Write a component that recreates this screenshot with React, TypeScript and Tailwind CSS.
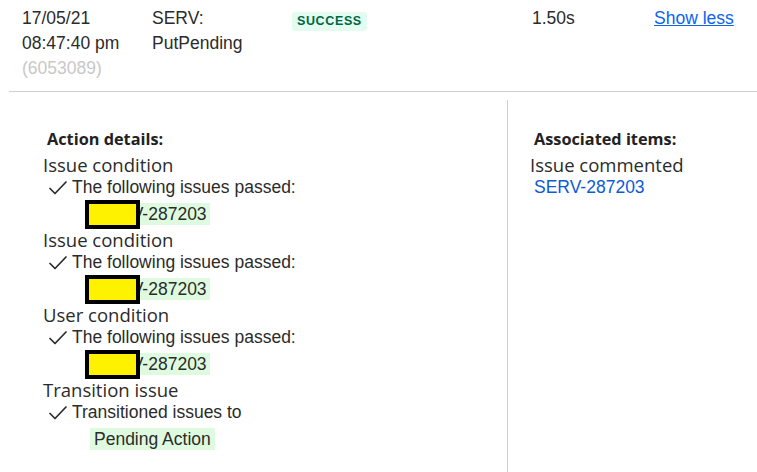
import React from "react";

const arial = { fontFamily: '"Liberation Sans", Arial, sans-serif' };
const segoe = { fontFamily: '"Open Sans", "Noto Sans", sans-serif' };

function Redacted({ id }: { id: string }) {
  return (
    <div className="h-[29px] flex items-center pl-[42px]">
      <span className="relative inline-block bg-[#dffbdf] leading-[22px] h-[22px] pl-[11px] pr-[3px] text-[17.5px] text-[#2b2b2b]" style={arial}>
        {id}
        <span className="absolute left-0 top-[-3px] w-[55px] h-[29px] border-[4px] border-black bg-[#fff200]" />
      </span>
    </div>
  );
}

function Check({ text }: { text: string }) {
  return (
    <div className="h-[23px] leading-[23px] flex items-center pl-[6px] text-[17.5px] text-[#2b2b2b]" style={arial}>
      <span className="w-[23px] flex items-center">
        <svg width="18" height="14" viewBox="0 0 18 14" fill="none">
          <path d="M1 7.5 L6 12.5 L17 1" stroke="#2b2b2b" strokeWidth="1.7" strokeLinecap="round" strokeLinejoin="round" />
        </svg>
      </span>
      <span>{text}</span>
    </div>
  );
}

function Heading({ text }: { text: string }) {
  return (
    <div className="h-[23px] leading-[23px] text-[18.5px] text-[#2b2b2b]" style={segoe}>
      {text}
    </div>
  );
}

export default function App() {
  return (
    <div className="w-[757px] h-[472px] bg-white overflow-hidden text-[#2b2b2b]" style={arial}>
      <div className="flex pl-[22px] pt-[6px] h-[91px] text-[17.5px] leading-[25px]">
        <div className="w-[130px]">
          <div>17/05/21</div>
          <div>08:47:40 pm</div>
          <div className="text-[#c8c8c8]">(6053089)</div>
        </div>
        <div className="w-[140px]">
          <div>SERV:</div>
          <div>PutPending</div>
        </div>
        <div className="w-[240px] pt-[1px]">
          <span className="inline-block bg-[#e3fcef] text-[#006644] font-bold text-[12.5px] leading-[19px] h-[19px] px-[5px] rounded-[3px] tracking-[0.05em]">SUCCESS</span>
        </div>
        <div className="w-[122px]">1.50s</div>
        <div>
          <a className="text-[#0b64f0] underline cursor-pointer">Show less</a>
        </div>
      </div>
      <div className="ml-[9px] border-t border-[#cfcfcf] flex pt-[8px]">
        <div className="w-[498px] pl-[34px] pt-[28px]">
          <div className="h-[25px] leading-[23px] font-bold text-[16.3px] pl-[4px] text-[#222]" style={segoe}>Action details:</div>
          <Heading text="Issue condition" />
          <Check text="The following issues passed:" />
          <Redacted id="SERV-287203" />
          <Heading text="Issue condition" />
          <Check text="The following issues passed:" />
          <Redacted id="SERV-287203" />
          <Heading text="User condition" />
          <Check text="The following issues passed:" />
          <Redacted id="SERV-287203" />
          <Heading text="Transition issue" />
          <Check text="Transitioned issues to" />
          <div className="h-[29px] flex items-center pl-[47px]">
            <span className="inline-block bg-[#dffbdf] leading-[22px] h-[22px] px-[4px] text-[17.5px] text-[#2b2b2b]">Pending Action</span>
          </div>
        </div>
        <div className="flex-1 border-l border-[#cfcfcf] h-[380px] pl-[22px] pt-[28px]">
          <div className="h-[25px] leading-[23px] font-bold text-[16.3px] pl-[4px] text-[#222]" style={segoe}>Associated items:</div>
          <Heading text="Issue commented" />
          <div className="h-[23px] leading-[23px] pl-[4px] text-[17.5px] text-[#0b5ad6]">SERV-287203</div>
        </div>
      </div>
    </div>
  );
}
